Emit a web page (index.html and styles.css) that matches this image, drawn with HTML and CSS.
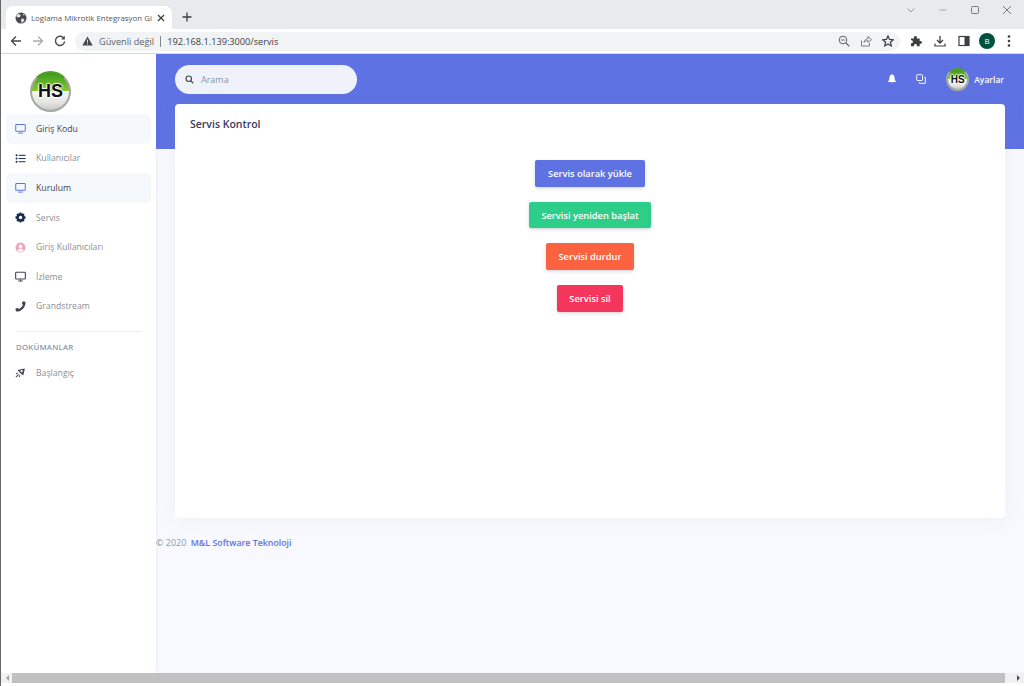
FILE: index.html
```html
<!DOCTYPE html>
<html lang="tr">
<head>
  <meta charset="UTF-8" />
  <meta name="viewport" content="width=device-width, initial-scale=1.0" />
  <title>Loglama Mikrotik Entegrasyon</title>
  <link rel="stylesheet" href="styles.css">
</head>
<body>
  <div class="window">
    <div class="tabstrip">
      <div class="tab">
        <svg class="tab-globe" viewBox="0 0 12 12"><circle cx="6" cy="6" r="5.5" fill="#46484c"/><path d="M3 1.8 5.8 3 5 5 2.8 5.4 1 4ZM6.5 6.5 9.4 7 8.6 9.6 6.8 11 6 8.4ZM8 1.6 10 3.2 8.4 3.6Z" fill="#e8eaed"/></svg>
        <span class="tab-title">Loglama Mikrotik Entegrasyon Gi</span>
        <svg class="tab-close" viewBox="0 0 8 8"><path d="M1 1 7 7M7 1 1 7" stroke="#3c4043" stroke-width="1.3"/></svg>
      </div>
      <svg class="new-tab" viewBox="0 0 10 10"><path d="M5 .5V9.5M.5 5H9.5" stroke="#3c4043" stroke-width="1.3"/></svg>
      <div class="win-controls">
        <svg viewBox="0 0 10 10"><path d="M1.5 3.5 5 6.8 8.5 3.5" fill="none" stroke="#9a9ca0"/></svg>
        <svg viewBox="0 0 10 10"><path d="M1.5 5H8.5" stroke="#a5a7aa"/></svg>
        <svg viewBox="0 0 10 10"><rect x="1.5" y="1.5" width="7" height="7" rx="1" fill="none" stroke="#77797d"/></svg>
        <svg viewBox="0 0 10 10"><path d="M1 1 9 9M9 1 1 9" stroke="#77797d"/></svg>
      </div>
    </div>

    <div class="toolbar">
      <svg class="nav-ico" viewBox="0 0 12 12"><path d="M11 6H1.5M6 1.5 1.5 6 6 10.500" fill="none" stroke="#46484c" stroke-width="1.3"/></svg>
      <svg class="nav-ico" viewBox="0 0 12 12"><path d="M1 6H10.500M6 1.500 10.500 6 6 10.500" fill="none" stroke="#a9abae" stroke-width="1.300"/></svg>
      <svg class="nav-ico" viewBox="0 0 12 12"><path d="M10 3.500A4.600 4.600 0 1 0 10.600 6.500" fill="none" stroke="#46484c" stroke-width="1.400"/><path d="M10.800 .8V4.500H7.100Z" fill="#46484c"/></svg>
      <div class="omnibox">
        <svg class="warn" viewBox="0 0 12 11"><path d="M6 .5 11.700 10.500H.3Z" fill="#46484c"/><path d="M6 4V7.300M6 8.200V9.400" stroke="#f1f3f4" stroke-width="1"/></svg>
        <span class="insecure">Güvenli değil</span>
        <span class="omni-sep"></span>
        <span class="url">192.168.1.139:3000/servis</span>
        <span class="omni-icons">
          <svg viewBox="0 0 12 12"><circle cx="5" cy="5" r="3.800" fill="none" stroke="#5f6368"/><path d="M8 8 11.300 11.300" stroke="#5f6368" stroke-width="1.200"/><path d="M3.200 5H6.800" stroke="#5f6368"/></svg>
          <svg viewBox="0 0 12 12"><path d="M1.500 5.500V11H9.500V8M4 7.500C4.300 5 6 3.700 8 3.700V1.500L11.500 4.700 8 7.500V5.600C6.300 5.600 5 6.200 4 7.500Z" fill="none" stroke="#6d7175" stroke-width=".9"/></svg>
          <svg viewBox="0 0 12 12"><path d="M6 .9 7.500 4.400 11.300 4.700 8.400 7.200 9.300 10.900 6 9 2.700 10.900 3.600 7.200 .7 4.700 4.500 4.400Z" fill="none" stroke="#3c4043" stroke-width="1.200"/></svg>
        </span>
      </div>
      <div class="tool-icons">
        <svg viewBox="0 0 12 12"><path d="M1 3.500H4V2.300A1.400 1.400 0 0 1 6.800 2.300V3.500H9.700V6H10.500A1.400 1.400 0 0 1 10.500 8.800H9.700V11.300H6.800V10.300A1.400 1.400 0 0 0 4 10.300V11.300H1V8.200H1.800A1.500 1.500 0 0 0 1.800 5.300H1Z" fill="#3c4043"/></svg>
        <svg viewBox="0 0 12 12"><path d="M6 1V7.800M3 5 6 8 9 5" fill="none" stroke="#3c4043" stroke-width="1.300"/><path d="M1 8.500V11H11V8.500" fill="none" stroke="#3c4043" stroke-width="1.200"/></svg>
        <svg viewBox="0 0 12 12"><rect x="1" y="1.500" width="10" height="9" fill="none" stroke="#3c4043" stroke-width="1.200"/><rect x="6.500" y="1.500" width="4.500" height="9" fill="#3c4043"/></svg>
        <span class="profile">B</span>
        <svg class="kebab" viewBox="0 0 4 14"><circle cx="2" cy="2.500" r="1.300" fill="#3c4043"/><circle cx="2" cy="7" r="1.300" fill="#3c4043"/><circle cx="2" cy="11.500" r="1.300" fill="#3c4043"/></svg>
      </div>
    </div>

    <div class="page">
      <aside class="sidebar">
        <div class="brand">
          <span class="logo logo-big">HS</span>
        </div>
        <ul class="menu">
          <li class="menu-item active">
            <svg viewBox="0 0 12 12"><rect x=".8" y="1.600" width="10.400" height="7.400" rx=".8" fill="none" stroke="#5e72e4" stroke-width="1.100"/><path d="M3.500 11H8.500" stroke="#5e72e4" stroke-width="1.100"/></svg>
            <span>Giriş Kodu</span>
          </li>
          <li class="menu-item">
            <svg viewBox="0 0 12 12"><g fill="#172b4d"><circle cx="1.700" cy="2.500" r="1.100"/><circle cx="1.700" cy="6" r="1.100"/><circle cx="1.700" cy="9.500" r="1.100"/><rect x="4" y="2" width="7.500" height="1.100"/><rect x="4" y="5.500" width="7.500" height="1.100"/><rect x="4" y="9" width="7.500" height="1.100"/></g></svg>
            <span>Kullanıcılar</span>
          </li>
          <li class="menu-item active">
            <svg viewBox="0 0 12 12"><rect x=".8" y="1.600" width="10.400" height="7.400" rx=".8" fill="none" stroke="#5e72e4" stroke-width="1.100"/><path d="M3.500 11H8.500" stroke="#5e72e4" stroke-width="1.100"/></svg>
            <span>Kurulum</span>
          </li>
          <li class="menu-item">
            <svg class="small" viewBox="0 0 12 12"><path d="M5 .5H7L7.400 2 8.900 1.300 10.500 2.900 9.800 4.400 11.500 5V7L9.800 7.600 10.500 9.100 8.900 10.700 7.400 10 7 11.500H5L4.600 10 3.100 10.700 1.500 9.100 2.200 7.600 .5 7V5L2.200 4.400 1.500 2.900 3.100 1.300 4.600 2Z" fill="#172b4d"/><circle cx="6" cy="6" r="1.800" fill="#fff"/></svg>
            <span>Servis</span>
          </li>
          <li class="menu-item">
            <svg viewBox="0 0 12 12"><circle cx="6" cy="6" r="5.500" fill="#f3a4b5"/><circle cx="6" cy="4.800" r="2" fill="#fff"/><path d="M2.800 9.300C3.400 7.800 4.600 7.400 6 7.400S8.600 7.800 9.200 9.300C8.300 10.200 7.200 10.600 6 10.600S3.700 10.200 2.800 9.300Z" fill="#fff"/></svg>
            <span>Giriş Kullanıcıları</span>
          </li>
          <li class="menu-item">
            <svg viewBox="0 0 12 12"><rect x=".7" y="1.300" width="10.600" height="7.400" rx=".8" fill="none" stroke="#44464f" stroke-width="1.200"/><path d="M6 9V10.500M3.500 11H8.500" stroke="#44464f" stroke-width="1.100"/></svg>
            <span>İzleme</span>
          </li>
          <li class="menu-item">
            <svg class="small" viewBox="0 0 12 12"><path d="M11 .8 8.500 .3 7.400 2.900 8.700 4C8 5.800 6 7.800 4.100 8.600L3 7.300.4 8.400 1 11C1.100 11.300 1.300 11.500 1.600 11.500 7 11.500 11.500 7 11.500 1.500 11.500 1.200 11.300.9 11 .8Z" fill="#44464f"/></svg>
            <span>Grandstream</span>
          </li>
        </ul>
        <hr class="menu-rule">
        <h6 class="menu-heading">DOKÜMANLAR</h6>
        <ul class="menu">
          <li class="menu-item">
            <svg viewBox="0 0 12 12"><path d="M2.800 3.200 10.800 1.500 9 9.200 5.500 6.500Z" fill="#44464f"/><circle cx="7.200" cy="4.600" r="1.200" fill="#fff"/><path d="M4 8 1 11M3 6.500 1 7.500M5.500 9 4.500 11" stroke="#44464f" stroke-width="1.100"/></svg>
            <span>Başlangıç</span>
          </li>
        </ul>
      </aside>

      <main class="main">
        <div class="hero">
          <nav class="topnav">
            <div class="search">
              <svg viewBox="0 0 12 12"><circle cx="5" cy="5" r="3.600" fill="none" stroke="#44464f" stroke-width="1.500"/><path d="M7.800 7.800 11 11" stroke="#44464f" stroke-width="1.700"/></svg>
              <span>Arama</span>
            </div>
            <div class="nav-right">
              <svg class="nav-bell" viewBox="0 0 12 12"><path d="M6 .5C3.800 .5 3 2.200 3 4.200 3 6.500 2.300 7.800 1.300 8.800V9.500H10.700V8.800C9.700 7.800 9 6.500 9 4.200 9 2.200 8.200 .5 6 .5ZM4.800 10.300A1.300 1.300 0 0 0 7.200 10.300Z" fill="#fff"/></svg>
              <svg class="nav-pages" viewBox="0 0 12 12"><rect x=".8" y=".8" width="7" height="7" rx=".8" fill="none" stroke="#fff" stroke-width="1.100"/><path d="M9.800 4H11.200V11.200H4V9.800" fill="none" stroke="#fff" stroke-width="1.100"/></svg>
              <span class="logo logo-small">HS</span>
              <span class="nav-user">Ayarlar</span>
            </div>
          </nav>
        </div>

        <section class="card">
          <h3 class="card-title">Servis Kontrol</h3>
          <div class="actions">
            <button class="btn btn-primary">Servis olarak yükle</button>
            <button class="btn btn-success">Servisi yeniden başlat</button>
            <button class="btn btn-warning">Servisi durdur</button>
            <button class="btn btn-danger">Servisi sil</button>
          </div>
        </section>

        <footer class="footer">© 2020 <a href="#">M&amp;L Software Teknoloji</a></footer>
      </main>
    </div>

    <div class="hscroll">
      <span class="arrow-left"></span>
      <span class="thumb"></span>
      <span class="arrow-right"></span>
    </div>
  </div>
</body>
</html>
```

FILE: styles.css
```css
html, body {
  margin: 0;
  height: 100%;
  overflow: hidden;
}
body {
  font-family: "Open Sans", Arial, sans-serif;
  background: #fff;
}
.window {
  height: 686px;
  display: flex;
  flex-direction: column;
  border-left: 1px solid #666;
  box-sizing: border-box;
}

/* browser chrome */
.tabstrip {
  height: 29px;
  flex: none;
  background: #e8eaed;
  display: flex;
  align-items: flex-end;
  padding-left: 5px;
}
.tab {
  width: 166px;
  height: 23px;
  background: #fff;
  border-radius: 7px 7px 0 0;
  display: flex;
  align-items: center;
  padding: 0 4px 0 9px;
  box-sizing: border-box;
}
.tab-globe {
  width: 12px;
  height: 12px;
  flex: none;
  margin-right: 4px;
}
.tab-title {
  flex: 1;
  min-width: 0;
  font-size: 7.900px;
  color: #55575b;
  white-space: nowrap;
}
.tab-close {
  width: 8px;
  height: 8px;
  flex: none;
  margin: 0 3px 0 5px;
}
.new-tab {
  width: 10px;
  height: 10px;
  margin: 0 0 7px 10px;
}
.win-controls {
  margin-left: auto;
  align-self: flex-start;
  display: flex;
  gap: 22px;
  padding: 5px 12px 0 0;
}
.win-controls svg {
  width: 10px;
  height: 10px;
}
.toolbar {
  height: 25px;
  flex: none;
  background: #fff;
  border-bottom: 1px solid #dadce0;
  display: flex;
  align-items: center;
  padding: 0 6px 0 9px;
  box-sizing: border-box;
}
.nav-ico {
  width: 12px;
  height: 12px;
  margin-right: 10px;
  flex: none;
}
.omnibox {
  width: 825px;
  height: 19px;
  flex: none;
  margin-left: -1px;
  border-radius: 10px;
  background: #f1f3f4;
  display: flex;
  align-items: center;
  padding: 0 6px 0 7px;
  box-sizing: border-box;
  font-size: 9.200px;
}
.warn {
  width: 11px;
  height: 10px;
  margin-right: 6px;
}
.insecure {
  color: #5f6368;
}
.omni-sep {
  width: 1px;
  height: 11px;
  background: #80868b;
  margin: 0 6px;
}
.url {
  color: #3c4043;
}
.omni-icons {
  margin-left: auto;
  display: flex;
  gap: 10px;
}
.omni-icons svg {
  width: 12px;
  height: 12px;
}
.tool-icons {
  display: flex;
  align-items: center;
  gap: 12px;
  margin-left: 10px;
}
.tool-icons svg {
  width: 12px;
  height: 12px;
  flex: none;
}
.tool-icons .kebab {
  width: 4px;
  height: 14px;
}
.profile {
  width: 16px;
  height: 16px;
  flex: none;
  border-radius: 50%;
  background: #00513f;
  color: #fff;
  font-size: 8px;
  line-height: 16px;
  text-align: center;
  margin-left: -3px;
}

/* page */
.page {
  flex: 1;
  min-height: 0;
  display: flex;
  background: #f8f9fe;
}
.sidebar {
  width: 155px;
  flex: none;
  background: #fff;
  box-shadow: 0 0 3px rgba(136, 152, 170, .2);
  padding: 17px 5px 0;
  box-sizing: border-box;
}
.brand {
  height: 43px;
  display: flex;
  padding-left: 24px;
}
.logo {
  display: block;
  flex: none;
  border-radius: 50%;
  background: linear-gradient(#3d9a1c 0, #86c82e 48%, #f4f4f2 50%, #e4e5e2 80%, #c4c7c2 100%);
  border: 2px solid #a4a8a2;
  border-top-color: #4f9e2a;
  box-sizing: border-box;
  text-align: center;
  font-family: "Liberation Sans", Arial, sans-serif;
  font-weight: 700;
  color: #111;
  text-shadow: 1px 0 1px #fff, -1px 0 1px #fff, 0 1px 1px #fff, 0 -1px 1px #fff;
}
.logo-big {
  width: 41px;
  height: 41px;
  font-size: 18px;
  line-height: 37px;
}
.logo-small {
  width: 23px;
  height: 23px;
  font-size: 10px;
  line-height: 19px;
}
.menu {
  list-style: none;
  margin: 0;
  padding: 0;
}
.menu-item {
  height: 29.600px;
  display: flex;
  align-items: center;
  padding-left: 9px;
  border-radius: 5px;
  font-size: 8.700px;
  color: #8a8f97;
}
.menu-item svg {
  width: 11px;
  height: 11px;
  flex: none;
  margin-right: 10px;
}
.menu-item.active {
  background: #f6f9fc;
  color: #3d4352;
}
.menu-rule {
  border: 0;
  border-top: 1px solid #e9ecef;
  margin: 10px 11px 10px 10px;
}
.menu-heading {
  margin: 0 0 5px 10px;
  font-size: 7.800px;
  font-weight: 600;
  line-height: 11px;
  letter-spacing: .2px;
  color: #8898aa;
}

/* main column */
.main {
  flex: 1;
  min-width: 0;
}
.hero {
  height: 95px;
  background: #5e72e4;
}
.topnav {
  height: 50px;
  display: flex;
  align-items: center;
  justify-content: space-between;
  padding: 0 20px 0 19px;
}
.search {
  width: 182px;
  height: 29px;
  border-radius: 15px;
  background: #f0f2fb;
  display: flex;
  align-items: center;
  padding-left: 10px;
  box-sizing: border-box;
  font-size: 9px;
  color: #8b92a0;
}
.search svg {
  width: 9px;
  height: 9px;
  margin-right: 7px;
}
.nav-right {
  display: flex;
  align-items: center;
  color: #fff;
}
.nav-bell {
  width: 10px;
  height: 10px;
  margin-right: 19px;
}
.nav-pages {
  width: 10px;
  height: 10px;
  margin-right: 20px;
}
.nav-user {
  font-size: 8.500px;
  font-weight: 600;
  margin-left: 5px;
}
.card {
  height: 414px;
  margin: -45px 19px 0;
  background: #fff;
  border-radius: 4px;
  box-shadow: 0 0 20px rgba(136, 152, 170, .1);
  padding: 13px 15px 0;
  box-sizing: border-box;
}
.card-title {
  margin: 0;
  font-size: 10.500px;
  font-weight: 600;
  line-height: 15px;
  color: #3a3a62;
}
.actions {
  margin-top: 28px;
  display: flex;
  flex-direction: column;
  align-items: center;
  gap: 15px;
}
.btn {
  height: 26.700px;
  padding: 0 12.800px;
  border: 0;
  border-radius: 2px;
  font-family: inherit;
  font-size: 9.300px;
  font-weight: 600;
  color: #fff;
  box-shadow: 0 2px 4px rgba(50, 50, 93, .11), 0 1px 2px rgba(0, 0, 0, .08);
}
.btn-primary {
  background: #5e72e4;
}
.btn-success {
  background: #2dce89;
}
.btn-warning {
  background: #fb6340;
}
.btn-danger {
  background: #f5365c;
}
.footer {
  margin-top: 18px;
  font-size: 9px;
  line-height: 14px;
  color: #8898aa;
}
.footer a {
  margin-left: 2px;
  color: #5e72e4;
  font-size: 8.800px;
  font-weight: 600;
  text-decoration: none;
}

/* scrollbar */
.hscroll {
  height: 10px;
  flex: none;
  margin-bottom: 3px;
  background: #f1f1f1;
  display: flex;
  align-items: center;
}
.thumb {
  flex: 1;
  height: 100%;
  background: #c1c1c1;
  margin: 0 12px 0 0;
}
.arrow-left, .arrow-right {
  width: 0;
  height: 0;
  border: 3px solid transparent;
}
.arrow-left {
  border-right-color: #a3a3a3;
  margin: 0 3px 0 2px;
}
.arrow-right {
  border-left-color: #505050;
  margin-right: 1px;
}
```
